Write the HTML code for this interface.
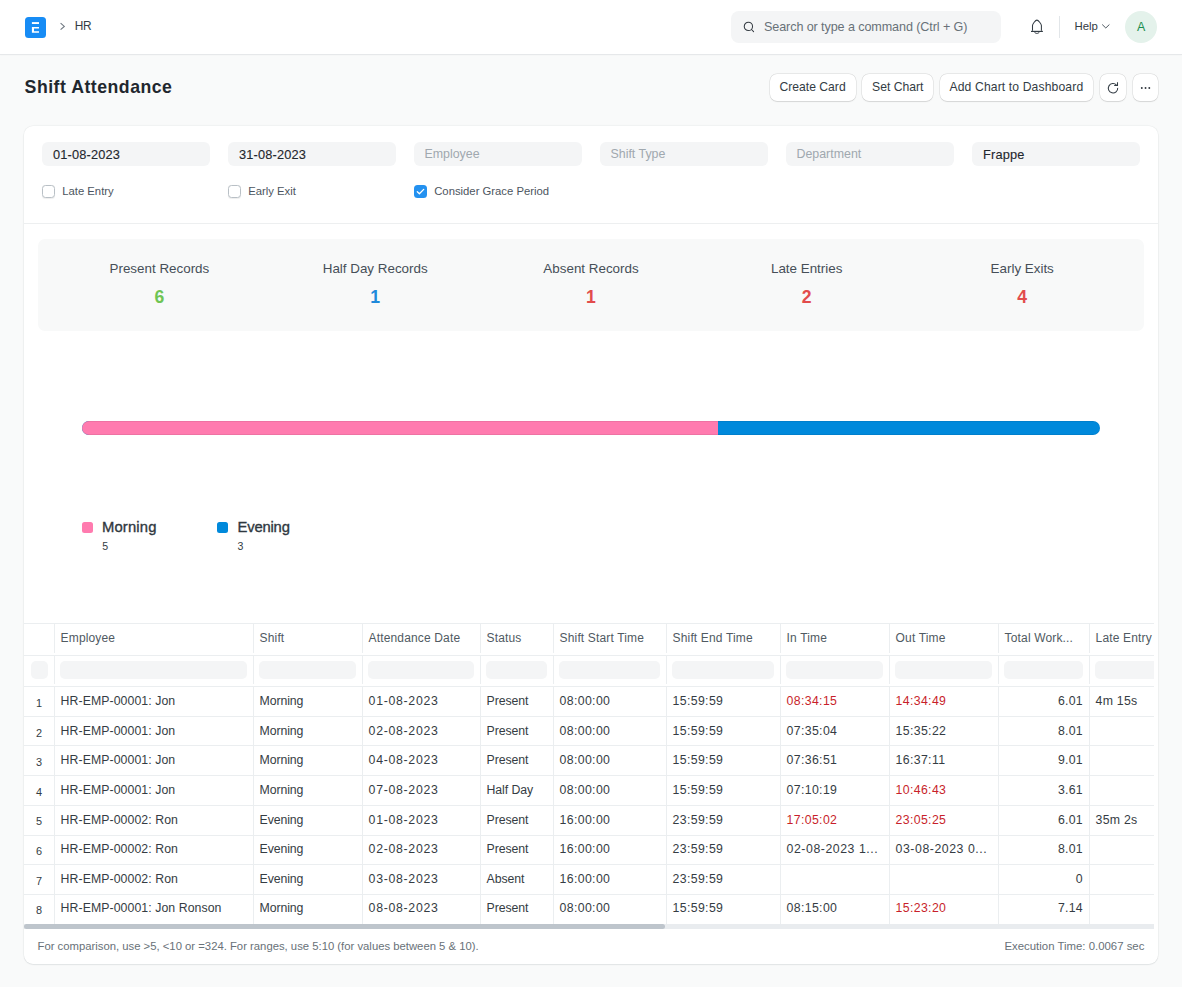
<!DOCTYPE html>
<html><head><meta charset="utf-8">
<style>
*{box-sizing:border-box;margin:0;padding:0}
html,body{width:1182px;height:987px;overflow:hidden}
body{background:#F9FAFA;font-family:"Liberation Sans",sans-serif;color:#1F272E;position:relative}
.abs{position:absolute}
.t{position:absolute;white-space:nowrap;line-height:1}
.nav{position:absolute;left:0;top:0;width:1182px;height:55px;background:#fff;border-bottom:1px solid #E6E8EA;box-shadow:0 0.5px 1.5px rgba(25,39,52,.04)}
.search{left:731px;top:11px;width:270px;height:32px;background:#F4F5F6;border-radius:8px}
.btn{position:absolute;top:73.5px;height:27.6px;background:#fff;border-radius:7px;box-shadow:0 0 0 0.5px rgba(0,0,0,.12),0 0.6px 1.2px rgba(0,0,0,.09)}
.card{left:24px;top:126px;width:1134px;height:838px;background:#fff;border-radius:9px;box-shadow:0 0 0 0.6px rgba(25,39,52,.045),0 1px 1.2px rgba(25,39,52,.07),0 0 2.5px rgba(25,39,52,.04)}
.inp{position:absolute;top:142px;width:168px;height:24px;background:#F4F5F6;border-radius:6px}
.cb{position:absolute;top:185px;width:13px;height:13px;border:1px solid #B9C0C6;border-radius:3.5px;background:#fff;box-shadow:0 0.8px 1px rgba(0,0,0,.07)}
</style></head><body>
<div class="nav"></div>
<!-- logo -->
<svg class="abs" style="left:25px;top:17px" width="21" height="21" viewBox="0 0 21 21">
<rect width="21" height="21" rx="3.5" fill="#178CF5"/>
<rect x="6.9" y="5.1" width="7.1" height="1.9" fill="#fff"/>
<path d="M6.9 10.1H14V11.6H9V14.3H14V15.8H6.9Z" fill="#fff"/>
</svg>
<svg class="abs" style="left:59px;top:22px" width="8" height="9" viewBox="0 0 8 9"><path d="M1.6 1.1L5.3 4.4L1.6 7.7" fill="none" stroke="#6E7780" stroke-width="1.1"/></svg>
<div class="t" style="left:74.8px;top:20.7px;font-size:11.9px;letter-spacing:-0.35px;color:#333C44">HR</div>

<div class="abs search"></div>
<svg class="abs" style="left:742px;top:20px" width="14" height="14" viewBox="0 0 14 14"><circle cx="6.4" cy="6.4" r="4.15" fill="none" stroke="#343B42" stroke-width="1.05"/><path d="M9.5 9.5L11.6 11.6" stroke="#343B42" stroke-width="1.05" stroke-linecap="round"/></svg>
<div class="t" style="left:764px;top:21px;font-size:12.6px;letter-spacing:-0.1px;color:#687178">Search or type a command (Ctrl + G)</div>

<svg class="abs" style="left:1027px;top:16px" width="20" height="22" viewBox="0 0 20 22">
<path d="M5.5 14.8V9.6C5.5 8 8.5 4.1 9.9 4.1C11.3 4.1 14.4 8 14.4 9.6V14.8" fill="none" stroke="#333C44" stroke-width="1.05"/>
<path d="M4 15.4H15.9" fill="none" stroke="#333C44" stroke-width="1.15"/>
<path d="M7.5 15.9C8.1 17.9 11.7 17.9 12.3 15.9" fill="none" stroke="#333C44" stroke-width="1"/>
</svg>
<div class="abs" style="left:1059px;top:16px;width:1px;height:22px;background:#E2E6E9"></div>
<div class="t" style="left:1074.5px;top:20.5px;font-size:11.4px;color:#333C44">Help</div>
<svg class="abs" style="left:1101px;top:23px" width="10" height="7" viewBox="0 0 10 7"><path d="M1.2 1.5L4.8 5L8.4 1.5" fill="none" stroke="#505A62" stroke-width="1"/></svg>
<div class="abs" style="left:1125px;top:11px;width:32px;height:32px;border-radius:50%;background:#E4F2EB"></div>
<div class="t" style="left:1137px;top:20.5px;font-size:12.4px;color:#198E4E">A</div>

<div class="t" style="left:24.6px;top:78.7px;font-size:17.7px;font-weight:bold;letter-spacing:0.5px;color:#1F272E">Shift Attendance</div>

<div class="btn" style="left:769.5px;width:86px"><div class="t" style="left:10px;top:7.5px;font-size:12.15px;color:#333C44">Create Card</div></div>
<div class="btn" style="left:861.5px;width:71.6px"><div class="t" style="left:10.5px;top:7.5px;font-size:12.2px;color:#333C44">Set Chart</div></div>
<div class="btn" style="left:939.5px;width:153.4px"><div class="t" style="left:10px;top:7.5px;font-size:12.15px;letter-spacing:0.13px;color:#333C44">Add Chart to Dashboard</div></div>
<div class="btn" style="left:1099.5px;width:26.6px"></div>
<svg class="abs" style="left:1104px;top:79px" width="18" height="18" viewBox="0 0 18 18"><path d="M13.7 8.9A4.7 4.7 0 1 1 12.5 6.1" fill="none" stroke="#333C44" stroke-width="1.05"/><path d="M13.5 3.2V6.45H10.2" fill="none" stroke="#333C44" stroke-width="1.05"/></svg>
<div class="btn" style="left:1132.5px;width:25.6px"></div>
<svg class="abs" style="left:1140px;top:86px" width="12" height="4" viewBox="0 0 12 4"><circle cx="1.8" cy="2" r="0.95" fill="#30373E"/><circle cx="5.55" cy="2" r="0.95" fill="#30373E"/><circle cx="9.3" cy="2" r="0.95" fill="#30373E"/></svg>

<div class="abs card"></div>


<div class="inp" style="left:42px"></div>
<div class="t" style="left:53px;top:148.55px;font-size:12.8px;color:#1F272E;-webkit-text-stroke:0.12px #1F272E;letter-spacing:0.15px">01-08-2023</div>
<div class="inp" style="left:228px"></div>
<div class="t" style="left:239px;top:148.55px;font-size:12.8px;color:#1F272E;-webkit-text-stroke:0.12px #1F272E;letter-spacing:0.15px">31-08-2023</div>
<div class="inp" style="left:414px"></div>
<div class="t" style="left:424.5px;top:148.32px;font-size:12.4px;color:#A0A8AF;">Employee</div>
<div class="inp" style="left:600px"></div>
<div class="t" style="left:610.5px;top:148.32px;font-size:12.4px;color:#A0A8AF;">Shift Type</div>
<div class="inp" style="left:786px"></div>
<div class="t" style="left:796.5px;top:148.32px;font-size:12.4px;color:#A0A8AF;">Department</div>
<div class="inp" style="left:972px"></div>
<div class="t" style="left:983px;top:148.55px;font-size:12.8px;color:#1F272E;-webkit-text-stroke:0.12px #1F272E;letter-spacing:0.15px">Frappe</div>
<div class="cb" style="left:42px"></div>
<div class="t" style="left:62.2px;top:186.39px;font-size:11.3px;color:#4C5560;">Late Entry</div>
<div class="cb" style="left:228px"></div>
<div class="t" style="left:248.2px;top:186.39px;font-size:11.3px;color:#4C5560;">Early Exit</div>
<div class="abs" style="left:414px;top:185px;width:13px;height:13px;border-radius:3.5px;background:#2391F0"></div>
<svg class="abs" style="left:414px;top:185px" width="13" height="13" viewBox="0 0 13 13"><path d="M3.3 6.7L5.4 8.7L9.7 4.4" fill="none" stroke="#fff" stroke-width="1.3" stroke-linecap="round" stroke-linejoin="round"/></svg>
<div class="t" style="left:434.2px;top:186.39px;font-size:11.3px;color:#4C5560;">Consider Grace Period</div>
<div class="abs" style="left:24px;top:223px;width:1134px;height:1px;background:#EDEFF0"></div>
<div class="abs" style="left:38px;top:239px;width:1106px;height:92px;background:#F8F9F9;border-radius:7px"></div>
<div class="t" style="left:9.400000000000006px;width:300px;text-align:center;top:261.66px;font-size:13.4px;color:#464F58">Present Records</div>
<div class="t" style="left:109.4px;width:100px;text-align:center;top:288.78px;font-size:17.6px;font-weight:bold;color:#6FC554">6</div>
<div class="t" style="left:225.2px;width:300px;text-align:center;top:261.66px;font-size:13.4px;color:#464F58">Half Day Records</div>
<div class="t" style="left:325.2px;width:100px;text-align:center;top:288.78px;font-size:17.6px;font-weight:bold;color:#1F8ADB">1</div>
<div class="t" style="left:441px;width:300px;text-align:center;top:261.66px;font-size:13.4px;color:#464F58">Absent Records</div>
<div class="t" style="left:541px;width:100px;text-align:center;top:288.78px;font-size:17.6px;font-weight:bold;color:#E24C4C">1</div>
<div class="t" style="left:656.7px;width:300px;text-align:center;top:261.66px;font-size:13.4px;color:#464F58">Late Entries</div>
<div class="t" style="left:756.7px;width:100px;text-align:center;top:288.78px;font-size:17.6px;font-weight:bold;color:#E24C4C">2</div>
<div class="t" style="left:872.2px;width:300px;text-align:center;top:261.66px;font-size:13.4px;color:#464F58">Early Exits</div>
<div class="t" style="left:972.2px;width:100px;text-align:center;top:288.78px;font-size:17.6px;font-weight:bold;color:#E24C4C">4</div>
<div class="abs" style="left:82px;top:421px;width:1018px;height:14px;border-radius:7px;overflow:hidden;background:#0089DB"><div style="position:absolute;left:0;top:0;width:636px;height:14px;background:#FF7BAF"></div><div style="position:absolute;left:0;top:0;width:1018px;height:14px;border-radius:7px;box-shadow:inset 0 0.7px 0 rgba(0,0,0,.09),inset 0 -0.7px 0 rgba(0,0,0,.09)"></div></div>
<div class="abs" style="left:82px;top:521.8px;width:11px;height:11px;border-radius:2.5px;background:#FF7BAF"></div>
<div class="abs" style="left:217px;top:521.8px;width:11px;height:11px;border-radius:2.5px;background:#0089DB"></div>
<div class="t" style="left:102px;top:520.23px;font-size:14.8px;color:#2F3840;-webkit-text-stroke:0.35px #2F3840;letter-spacing:0.15px">Morning</div>
<div class="t" style="left:237.6px;top:520.23px;font-size:14.8px;color:#2F3840;-webkit-text-stroke:0.35px #2F3840;letter-spacing:-0.2px">Evening</div>
<div class="t" style="left:102.2px;top:540.90px;font-size:10.6px;color:#333C44;">5</div>
<div class="t" style="left:237.6px;top:540.90px;font-size:10.6px;color:#333C44;">3</div>
<div class="abs" style="left:24px;top:600px;width:1130px;height:340px;overflow:hidden">
<div class="abs" style="left:0px;top:23px;width:1130px;height:1px;background:#EBEEF0"></div>
<div class="abs" style="left:0px;top:55px;width:1130px;height:1px;background:#EBEEF0"></div>
<div class="abs" style="left:0px;top:86px;width:1130px;height:1px;background:#EBEEF0"></div>
<div class="abs" style="left:0px;top:116px;width:1130px;height:1px;background:#EBEEF0"></div>
<div class="abs" style="left:0px;top:145px;width:1130px;height:1px;background:#EBEEF0"></div>
<div class="abs" style="left:0px;top:175px;width:1130px;height:1px;background:#EBEEF0"></div>
<div class="abs" style="left:0px;top:205px;width:1130px;height:1px;background:#EBEEF0"></div>
<div class="abs" style="left:0px;top:235px;width:1130px;height:1px;background:#EBEEF0"></div>
<div class="abs" style="left:0px;top:264px;width:1130px;height:1px;background:#EBEEF0"></div>
<div class="abs" style="left:0px;top:294px;width:1130px;height:1px;background:#EBEEF0"></div>
<div class="abs" style="left:30px;top:24px;width:1px;height:29px;background:#EBEEF0"></div>
<div class="abs" style="left:30px;top:56px;width:1px;height:28px;background:#EBEEF0"></div>
<div class="abs" style="left:30px;top:87px;width:1px;height:237px;background:#EBEEF0"></div>
<div class="abs" style="left:229px;top:24px;width:1px;height:29px;background:#EBEEF0"></div>
<div class="abs" style="left:229px;top:56px;width:1px;height:28px;background:#EBEEF0"></div>
<div class="abs" style="left:229px;top:87px;width:1px;height:237px;background:#EBEEF0"></div>
<div class="abs" style="left:338px;top:24px;width:1px;height:29px;background:#EBEEF0"></div>
<div class="abs" style="left:338px;top:56px;width:1px;height:28px;background:#EBEEF0"></div>
<div class="abs" style="left:338px;top:87px;width:1px;height:237px;background:#EBEEF0"></div>
<div class="abs" style="left:456px;top:24px;width:1px;height:29px;background:#EBEEF0"></div>
<div class="abs" style="left:456px;top:56px;width:1px;height:28px;background:#EBEEF0"></div>
<div class="abs" style="left:456px;top:87px;width:1px;height:237px;background:#EBEEF0"></div>
<div class="abs" style="left:529px;top:24px;width:1px;height:29px;background:#EBEEF0"></div>
<div class="abs" style="left:529px;top:56px;width:1px;height:28px;background:#EBEEF0"></div>
<div class="abs" style="left:529px;top:87px;width:1px;height:237px;background:#EBEEF0"></div>
<div class="abs" style="left:642px;top:24px;width:1px;height:29px;background:#EBEEF0"></div>
<div class="abs" style="left:642px;top:56px;width:1px;height:28px;background:#EBEEF0"></div>
<div class="abs" style="left:642px;top:87px;width:1px;height:237px;background:#EBEEF0"></div>
<div class="abs" style="left:756px;top:24px;width:1px;height:29px;background:#EBEEF0"></div>
<div class="abs" style="left:756px;top:56px;width:1px;height:28px;background:#EBEEF0"></div>
<div class="abs" style="left:756px;top:87px;width:1px;height:237px;background:#EBEEF0"></div>
<div class="abs" style="left:865px;top:24px;width:1px;height:29px;background:#EBEEF0"></div>
<div class="abs" style="left:865px;top:56px;width:1px;height:28px;background:#EBEEF0"></div>
<div class="abs" style="left:865px;top:87px;width:1px;height:237px;background:#EBEEF0"></div>
<div class="abs" style="left:974px;top:24px;width:1px;height:29px;background:#EBEEF0"></div>
<div class="abs" style="left:974px;top:56px;width:1px;height:28px;background:#EBEEF0"></div>
<div class="abs" style="left:974px;top:87px;width:1px;height:237px;background:#EBEEF0"></div>
<div class="abs" style="left:1065px;top:24px;width:1px;height:29px;background:#EBEEF0"></div>
<div class="abs" style="left:1065px;top:56px;width:1px;height:28px;background:#EBEEF0"></div>
<div class="abs" style="left:1065px;top:87px;width:1px;height:237px;background:#EBEEF0"></div>
<div class="t" style="left:36.60px;top:32.38px;font-size:12.0px;color:#505A62;letter-spacing:0.15px">Employee</div>
<div class="t" style="left:235.60px;top:32.38px;font-size:12.0px;color:#505A62;letter-spacing:0.15px">Shift</div>
<div class="t" style="left:344.60px;top:32.38px;font-size:12.0px;color:#505A62;letter-spacing:0.15px">Attendance Date</div>
<div class="t" style="left:462.60px;top:32.38px;font-size:12.0px;color:#505A62;letter-spacing:0.15px">Status</div>
<div class="t" style="left:535.60px;top:32.38px;font-size:12.0px;color:#505A62;letter-spacing:0.15px">Shift Start Time</div>
<div class="t" style="left:648.60px;top:32.38px;font-size:12.0px;color:#505A62;letter-spacing:0.15px">Shift End Time</div>
<div class="t" style="left:762.60px;top:32.38px;font-size:12.0px;color:#505A62;letter-spacing:0.15px">In Time</div>
<div class="t" style="left:871.60px;top:32.38px;font-size:12.0px;color:#505A62;letter-spacing:0.15px">Out Time</div>
<div class="t" style="left:980.60px;top:32.38px;font-size:12.0px;color:#505A62;letter-spacing:0.15px">Total Work...</div>
<div class="t" style="left:1071.60px;top:32.38px;font-size:12.0px;color:#505A62;letter-spacing:0.15px">Late Entry</div>
<div class="abs" style="left:7px;top:61px;width:17px;height:18px;border-radius:5px;background:#F4F5F6"></div>
<div class="abs" style="left:36px;top:61px;width:187px;height:18px;border-radius:5px;background:#F4F5F6"></div>
<div class="abs" style="left:235px;top:61px;width:97px;height:18px;border-radius:5px;background:#F4F5F6"></div>
<div class="abs" style="left:344px;top:61px;width:106px;height:18px;border-radius:5px;background:#F4F5F6"></div>
<div class="abs" style="left:462px;top:61px;width:61px;height:18px;border-radius:5px;background:#F4F5F6"></div>
<div class="abs" style="left:535px;top:61px;width:101px;height:18px;border-radius:5px;background:#F4F5F6"></div>
<div class="abs" style="left:648px;top:61px;width:102px;height:18px;border-radius:5px;background:#F4F5F6"></div>
<div class="abs" style="left:762px;top:61px;width:97px;height:18px;border-radius:5px;background:#F4F5F6"></div>
<div class="abs" style="left:871px;top:61px;width:97px;height:18px;border-radius:5px;background:#F4F5F6"></div>
<div class="abs" style="left:980px;top:61px;width:79px;height:18px;border-radius:5px;background:#F4F5F6"></div>
<div class="abs" style="left:1071px;top:61px;width:65px;height:18px;border-radius:5px;background:#F4F5F6"></div>
<div class="t" style="left:0px;width:30px;text-align:center;top:98.16px;font-size:10.9px;color:#333C44">1</div>
<div class="t" style="left:36.60px;top:95.33px;font-size:12.3px;color:#353C43;letter-spacing:0.07px">HR-EMP-00001: Jon</div>
<div class="t" style="left:235.60px;top:95.33px;font-size:12.3px;color:#353C43;letter-spacing:-0.1px">Morning</div>
<div class="t" style="left:344.60px;top:95.33px;font-size:12.3px;color:#353C43;letter-spacing:0.7px">01-08-2023</div>
<div class="t" style="left:462.60px;top:95.33px;font-size:12.3px;color:#353C43;letter-spacing:-0.1px">Present</div>
<div class="t" style="left:535.60px;top:95.33px;font-size:12.3px;color:#353C43;letter-spacing:0.35px">08:00:00</div>
<div class="t" style="left:648.60px;top:95.33px;font-size:12.3px;color:#353C43;letter-spacing:0.35px">15:59:59</div>
<div class="t" style="left:762.60px;top:95.33px;font-size:12.3px;color:#C81F2B;letter-spacing:0.35px">08:34:15</div>
<div class="t" style="left:871.60px;top:95.33px;font-size:12.3px;color:#C81F2B;letter-spacing:0.35px">14:34:49</div>
<div class="t" style="left:974px;width:84.65px;text-align:right;top:95.33px;font-size:12.3px;color:#353C43;letter-spacing:0.15px">6.01</div>
<div class="t" style="left:1071.60px;top:95.33px;font-size:12.3px;color:#353C43;letter-spacing:0.25px">4m 15s</div>
<div class="t" style="left:0px;width:30px;text-align:center;top:127.74px;font-size:10.9px;color:#333C44">2</div>
<div class="t" style="left:36.60px;top:124.91px;font-size:12.3px;color:#353C43;letter-spacing:0.07px">HR-EMP-00001: Jon</div>
<div class="t" style="left:235.60px;top:124.91px;font-size:12.3px;color:#353C43;letter-spacing:-0.1px">Morning</div>
<div class="t" style="left:344.60px;top:124.91px;font-size:12.3px;color:#353C43;letter-spacing:0.7px">02-08-2023</div>
<div class="t" style="left:462.60px;top:124.91px;font-size:12.3px;color:#353C43;letter-spacing:-0.1px">Present</div>
<div class="t" style="left:535.60px;top:124.91px;font-size:12.3px;color:#353C43;letter-spacing:0.35px">08:00:00</div>
<div class="t" style="left:648.60px;top:124.91px;font-size:12.3px;color:#353C43;letter-spacing:0.35px">15:59:59</div>
<div class="t" style="left:762.60px;top:124.91px;font-size:12.3px;color:#353C43;letter-spacing:0.35px">07:35:04</div>
<div class="t" style="left:871.60px;top:124.91px;font-size:12.3px;color:#353C43;letter-spacing:0.35px">15:35:22</div>
<div class="t" style="left:974px;width:84.65px;text-align:right;top:124.91px;font-size:12.3px;color:#353C43;letter-spacing:0.15px">8.01</div>
<div class="t" style="left:0px;width:30px;text-align:center;top:157.32px;font-size:10.9px;color:#333C44">3</div>
<div class="t" style="left:36.60px;top:154.49px;font-size:12.3px;color:#353C43;letter-spacing:0.07px">HR-EMP-00001: Jon</div>
<div class="t" style="left:235.60px;top:154.49px;font-size:12.3px;color:#353C43;letter-spacing:-0.1px">Morning</div>
<div class="t" style="left:344.60px;top:154.49px;font-size:12.3px;color:#353C43;letter-spacing:0.7px">04-08-2023</div>
<div class="t" style="left:462.60px;top:154.49px;font-size:12.3px;color:#353C43;letter-spacing:-0.1px">Present</div>
<div class="t" style="left:535.60px;top:154.49px;font-size:12.3px;color:#353C43;letter-spacing:0.35px">08:00:00</div>
<div class="t" style="left:648.60px;top:154.49px;font-size:12.3px;color:#353C43;letter-spacing:0.35px">15:59:59</div>
<div class="t" style="left:762.60px;top:154.49px;font-size:12.3px;color:#353C43;letter-spacing:0.35px">07:36:51</div>
<div class="t" style="left:871.60px;top:154.49px;font-size:12.3px;color:#353C43;letter-spacing:0.35px">16:37:11</div>
<div class="t" style="left:974px;width:84.65px;text-align:right;top:154.49px;font-size:12.3px;color:#353C43;letter-spacing:0.15px">9.01</div>
<div class="t" style="left:0px;width:30px;text-align:center;top:186.90px;font-size:10.9px;color:#333C44">4</div>
<div class="t" style="left:36.60px;top:184.07px;font-size:12.3px;color:#353C43;letter-spacing:0.07px">HR-EMP-00001: Jon</div>
<div class="t" style="left:235.60px;top:184.07px;font-size:12.3px;color:#353C43;letter-spacing:-0.1px">Morning</div>
<div class="t" style="left:344.60px;top:184.07px;font-size:12.3px;color:#353C43;letter-spacing:0.7px">07-08-2023</div>
<div class="t" style="left:462.60px;top:184.07px;font-size:12.3px;color:#353C43;letter-spacing:-0.1px">Half Day</div>
<div class="t" style="left:535.60px;top:184.07px;font-size:12.3px;color:#353C43;letter-spacing:0.35px">08:00:00</div>
<div class="t" style="left:648.60px;top:184.07px;font-size:12.3px;color:#353C43;letter-spacing:0.35px">15:59:59</div>
<div class="t" style="left:762.60px;top:184.07px;font-size:12.3px;color:#353C43;letter-spacing:0.35px">07:10:19</div>
<div class="t" style="left:871.60px;top:184.07px;font-size:12.3px;color:#C81F2B;letter-spacing:0.35px">10:46:43</div>
<div class="t" style="left:974px;width:84.65px;text-align:right;top:184.07px;font-size:12.3px;color:#353C43;letter-spacing:0.15px">3.61</div>
<div class="t" style="left:0px;width:30px;text-align:center;top:216.48px;font-size:10.9px;color:#333C44">5</div>
<div class="t" style="left:36.60px;top:213.65px;font-size:12.3px;color:#353C43;letter-spacing:0.07px">HR-EMP-00002: Ron</div>
<div class="t" style="left:235.60px;top:213.65px;font-size:12.3px;color:#353C43;letter-spacing:-0.1px">Evening</div>
<div class="t" style="left:344.60px;top:213.65px;font-size:12.3px;color:#353C43;letter-spacing:0.7px">01-08-2023</div>
<div class="t" style="left:462.60px;top:213.65px;font-size:12.3px;color:#353C43;letter-spacing:-0.1px">Present</div>
<div class="t" style="left:535.60px;top:213.65px;font-size:12.3px;color:#353C43;letter-spacing:0.35px">16:00:00</div>
<div class="t" style="left:648.60px;top:213.65px;font-size:12.3px;color:#353C43;letter-spacing:0.35px">23:59:59</div>
<div class="t" style="left:762.60px;top:213.65px;font-size:12.3px;color:#C81F2B;letter-spacing:0.35px">17:05:02</div>
<div class="t" style="left:871.60px;top:213.65px;font-size:12.3px;color:#C81F2B;letter-spacing:0.35px">23:05:25</div>
<div class="t" style="left:974px;width:84.65px;text-align:right;top:213.65px;font-size:12.3px;color:#353C43;letter-spacing:0.15px">6.01</div>
<div class="t" style="left:1071.60px;top:213.65px;font-size:12.3px;color:#353C43;letter-spacing:0.25px">35m 2s</div>
<div class="t" style="left:0px;width:30px;text-align:center;top:246.06px;font-size:10.9px;color:#333C44">6</div>
<div class="t" style="left:36.60px;top:243.23px;font-size:12.3px;color:#353C43;letter-spacing:0.07px">HR-EMP-00002: Ron</div>
<div class="t" style="left:235.60px;top:243.23px;font-size:12.3px;color:#353C43;letter-spacing:-0.1px">Evening</div>
<div class="t" style="left:344.60px;top:243.23px;font-size:12.3px;color:#353C43;letter-spacing:0.7px">02-08-2023</div>
<div class="t" style="left:462.60px;top:243.23px;font-size:12.3px;color:#353C43;letter-spacing:-0.1px">Present</div>
<div class="t" style="left:535.60px;top:243.23px;font-size:12.3px;color:#353C43;letter-spacing:0.35px">16:00:00</div>
<div class="t" style="left:648.60px;top:243.23px;font-size:12.3px;color:#353C43;letter-spacing:0.35px">23:59:59</div>
<div class="t" style="left:762.60px;top:243.23px;font-size:12.3px;color:#353C43;letter-spacing:0.55px">02-08-2023 1...</div>
<div class="t" style="left:871.60px;top:243.23px;font-size:12.3px;color:#353C43;letter-spacing:0.55px">03-08-2023 0...</div>
<div class="t" style="left:974px;width:84.65px;text-align:right;top:243.23px;font-size:12.3px;color:#353C43;letter-spacing:0.15px">8.01</div>
<div class="t" style="left:0px;width:30px;text-align:center;top:275.64px;font-size:10.9px;color:#333C44">7</div>
<div class="t" style="left:36.60px;top:272.81px;font-size:12.3px;color:#353C43;letter-spacing:0.07px">HR-EMP-00002: Ron</div>
<div class="t" style="left:235.60px;top:272.81px;font-size:12.3px;color:#353C43;letter-spacing:-0.1px">Evening</div>
<div class="t" style="left:344.60px;top:272.81px;font-size:12.3px;color:#353C43;letter-spacing:0.7px">03-08-2023</div>
<div class="t" style="left:462.60px;top:272.81px;font-size:12.3px;color:#353C43;letter-spacing:-0.1px">Absent</div>
<div class="t" style="left:535.60px;top:272.81px;font-size:12.3px;color:#353C43;letter-spacing:0.35px">16:00:00</div>
<div class="t" style="left:648.60px;top:272.81px;font-size:12.3px;color:#353C43;letter-spacing:0.35px">23:59:59</div>
<div class="t" style="left:974px;width:84.65px;text-align:right;top:272.81px;font-size:12.3px;color:#353C43;letter-spacing:0.15px">0</div>
<div class="t" style="left:0px;width:30px;text-align:center;top:305.22px;font-size:10.9px;color:#333C44">8</div>
<div class="t" style="left:36.60px;top:302.39px;font-size:12.3px;color:#353C43;letter-spacing:0.07px">HR-EMP-00001: Jon Ronson</div>
<div class="t" style="left:235.60px;top:302.39px;font-size:12.3px;color:#353C43;letter-spacing:-0.1px">Morning</div>
<div class="t" style="left:344.60px;top:302.39px;font-size:12.3px;color:#353C43;letter-spacing:0.7px">08-08-2023</div>
<div class="t" style="left:462.60px;top:302.39px;font-size:12.3px;color:#353C43;letter-spacing:-0.1px">Present</div>
<div class="t" style="left:535.60px;top:302.39px;font-size:12.3px;color:#353C43;letter-spacing:0.35px">08:00:00</div>
<div class="t" style="left:648.60px;top:302.39px;font-size:12.3px;color:#353C43;letter-spacing:0.35px">15:59:59</div>
<div class="t" style="left:762.60px;top:302.39px;font-size:12.3px;color:#353C43;letter-spacing:0.35px">08:15:00</div>
<div class="t" style="left:871.60px;top:302.39px;font-size:12.3px;color:#C81F2B;letter-spacing:0.35px">15:23:20</div>
<div class="t" style="left:974px;width:84.65px;text-align:right;top:302.39px;font-size:12.3px;color:#353C43;letter-spacing:0.15px">7.14</div>
<div class="abs" style="left:0;top:324px;width:1130px;height:5px;background:#E9ECEF"></div>
<div class="abs" style="left:0;top:324px;width:641px;height:5px;border-radius:3px;background:#BEC5CC"></div>
</div>
<div class="t" style="left:37.5px;top:941.39px;font-size:11.3px;color:#687178;">For comparison, use &gt;5, &lt;10 or =324. For ranges, use 5:10 (for values between 5 &amp; 10).</div>
<div class="t" style="left:900px;width:244.4px;text-align:right;top:941.48px;font-size:11.4px;color:#687178">Execution Time: 0.0067 sec</div>
</body></html>
